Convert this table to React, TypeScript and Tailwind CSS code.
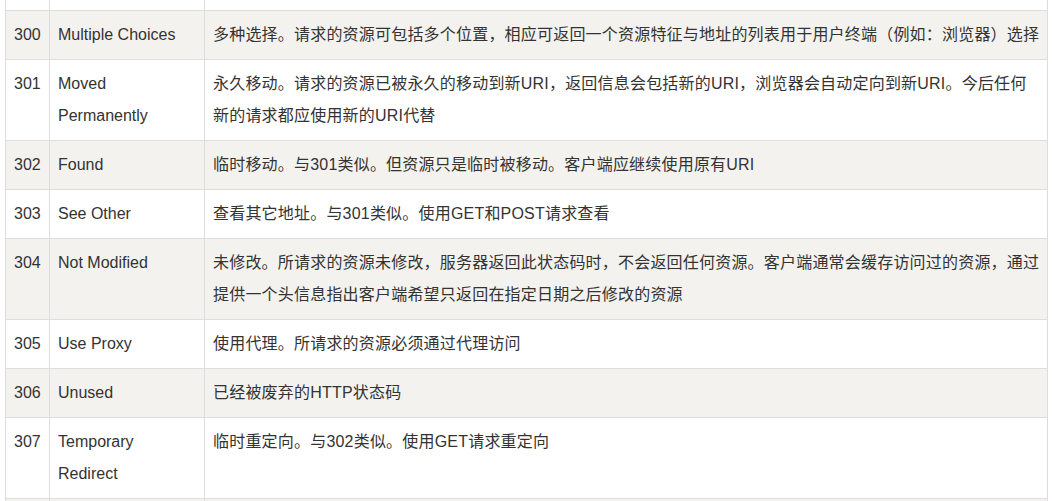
import React from 'react';

type Row = { code: string; name: string; desc: React.ReactNode };

const rows: Row[] = [
  {
    code: '300',
    name: 'Multiple Choices',
    desc: '多种选择。请求的资源可包括多个位置，相应可返回一个资源特征与地址的列表用于用户终端（例如：浏览器）选择',
  },
  {
    code: '301',
    name: 'Moved Permanently',
    desc: (
      <>
        永久移动。请求的资源已被永久的移动到新URI，返回信息会包括新的URI，浏览器会自动定向到新URI。今后任何
        <br />
        新的请求都应使用新的URI代替
      </>
    ),
  },
  { code: '302', name: 'Found', desc: '临时移动。与301类似。但资源只是临时被移动。客户端应继续使用原有URI' },
  { code: '303', name: 'See Other', desc: '查看其它地址。与301类似。使用GET和POST请求查看' },
  {
    code: '304',
    name: 'Not Modified',
    desc: (
      <>
        未修改。所请求的资源未修改，服务器返回此状态码时，不会返回任何资源。客户端通常会缓存访问过的资源，通过
        <br />
        提供一个头信息指出客户端希望只返回在指定日期之后修改的资源
      </>
    ),
  },
  { code: '305', name: 'Use Proxy', desc: '使用代理。所请求的资源必须通过代理访问' },
  { code: '306', name: 'Unused', desc: '已经被废弃的HTTP状态码' },
  { code: '307', name: 'Temporary Redirect', desc: '临时重定向。与302类似。使用GET请求重定向' },
];

const cell = 'border border-[#dddddd] px-2 py-2 align-top';

export default function App() {
  return (
    <div
      className="h-[501px] w-[1052px] overflow-hidden bg-white pl-[5px] pr-[4px] text-[16px] leading-8 text-[#333333]"
      style={{ fontFamily: '"Liberation Sans", "Noto Sans CJK SC", sans-serif' }}
    >
      <table className="w-[1043px] table-fixed border-collapse">
        <colgroup>
          <col className="w-[44px]" />
          <col className="w-[155px]" />
          <col />
        </colgroup>
        <tbody>
          <tr className="bg-white">
            <td className="h-[10px] border-x border-b border-[#dddddd] p-0" />
            <td className="h-[10px] border-x border-b border-[#dddddd] p-0" />
            <td className="h-[10px] border-x border-b border-[#dddddd] p-0" />
          </tr>
          {rows.map((r, i) => (
            <tr key={r.code} className={i % 2 === 0 ? 'bg-[#f4f2ee]' : 'bg-white'}>
              <td className={cell}>{r.code}</td>
              <td className={cell}>{r.name}</td>
              <td className={cell + ' whitespace-nowrap tracking-[0.2px]'}>{r.desc}</td>
            </tr>
          ))}
          <tr className="bg-[#f4f2ee]">
            <td className={cell}>&nbsp;</td>
            <td className={cell}>&nbsp;</td>
            <td className={cell}>&nbsp;</td>
          </tr>
        </tbody>
      </table>
    </div>
  );
}
